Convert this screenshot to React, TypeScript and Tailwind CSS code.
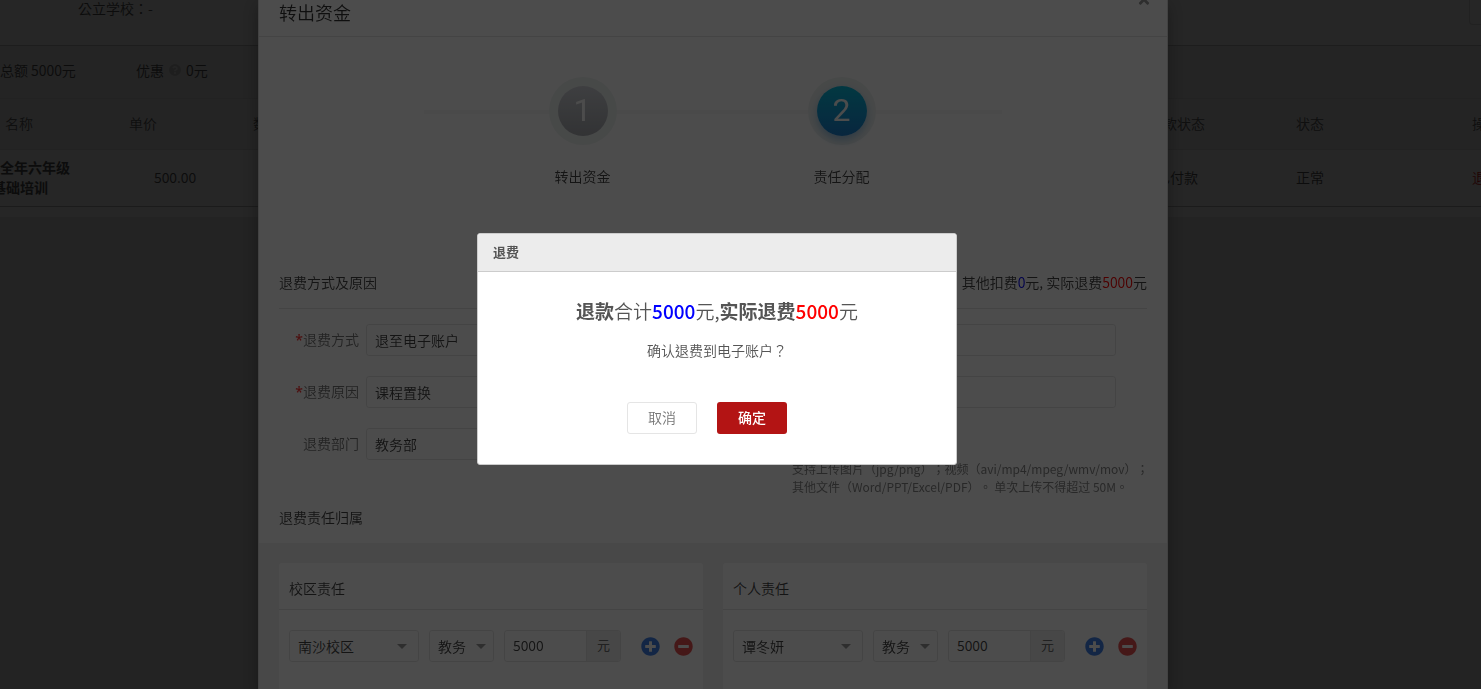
import React, { useState } from "react";
import {
  FaMinusCircle,
  FaPlusCircle,
  FaQuestionCircle,
  FaTimes,
} from "react-icons/fa";

interface DutyCardProps {
  title: string;
  owner: string;
}

interface SelectBoxProps {
  id?: string;
  label?: string;
  value: string;
  className?: string;
  small?: boolean;
}

const SelectBox = ({
  id,
  label,
  value,
  className = "",
  small,
}: SelectBoxProps) => (
  <div className={`relative h-8 ${className}`}>
    <select
      id={id}
      aria-label={label}
      className="block h-8 w-full appearance-none rounded-[3px] border border-[#e5e5e5] bg-white pl-2 text-sm text-[#444]"
    >
      <option>{value}</option>
    </select>
    <svg
      viewBox="0 0 10 5"
      className={`pointer-events-none absolute top-3.5 h-[5px] w-2.5 fill-[#999] ${
        small ? "right-2" : "right-3"
      }`}
    >
      <path d="M0 0h10L5 5z" />
    </svg>
  </div>
);

const Background = () => (
  <div className="min-h-screen overflow-hidden bg-[#ebebeb]">
    <div className="bg-white pb-2.5">
      <div className="flex h-[46px] justify-between border-b border-[#c4c4c4] pl-[78px]">
        <p className="font-['Noto_Sans_CJK_TC',sans-serif] leading-4">
          公立学校：-
        </p>
        <div className="h-[25px] w-3 rounded-bl border-b border-l border-[#ddd]" />
      </div>
      <div className="flex h-[52px] items-center bg-[#f1f1f1] pb-1">
        <p className="w-[136px]">总额 5000元</p>
        <p className="flex items-center gap-[5px]">
          优惠
          <FaQuestionCircle className="h-3 w-3 text-[#c8c8c8]" />
          0元
        </p>
      </div>
      <table className="w-full table-fixed border-b border-[#bbb] text-left">
        <colgroup>
          <col className="w-[129px]" />
          <col className="w-[124px]" />
          <col />
          <col className="w-[147px]" />
          <col className="w-[176px]" />
          <col className="w-[9px]" />
        </colgroup>
        <thead>
          <tr className="h-[51px] whitespace-nowrap border-y border-[#e4e4e4] bg-[#f5f5f5] text-[#666]">
            <th className="pb-0.5 pl-[5px] font-[350]">名称</th>
            <th className="pb-0.5 font-[350]">单价</th>
            <th className="pb-0.5 font-[350]">数</th>
            <th className="pb-0.5 font-[350]">付款状态</th>
            <th className="pb-0.5 font-[350]">状态</th>
            <th className="pb-0.5 font-[350]">操作</th>
          </tr>
        </thead>
        <tbody>
          <tr className="h-[57px] whitespace-nowrap">
            <td className="pb-0.5 font-bold leading-5">
              <p>全年六年级</p>
              <p className="-ml-2">基础培训</p>
            </td>
            <td className="pb-0.5 pl-[25px]">500.00</td>
            <td />
            <td className="pb-0.5 pl-[7px]">已付款</td>
            <td className="pb-0.5">正常</td>
            <td className="pb-0.5 text-[#e02020]">退</td>
          </tr>
        </tbody>
      </table>
    </div>
  </div>
);

const Steps = () => (
  <div className="relative mx-auto mt-10 flex w-[578px] justify-center pr-0.5 text-[#444]">
    <div className="absolute top-[33px] left-0 h-1 w-full bg-[#f8f8f8]" />
    <div className="relative flex w-[259px] flex-col items-center">
      <div className="flex h-[68px] w-[68px] items-center justify-center rounded-full bg-[#eff3f2]">
        <span className="flex h-[50px] w-[50px] items-center justify-center rounded-full bg-linear-to-b from-[#d0d2d8] to-[#a8abb0] font-['Roboto',sans-serif] text-[32px] font-normal text-white">
          1
        </span>
      </div>
      <p className="mt-[22px] leading-[18px]">转出资金</p>
    </div>
    <div className="relative flex w-[259px] flex-col items-center">
      <div className="flex h-[68px] w-[68px] items-center justify-center rounded-full bg-[#eff3f2]">
        <span className="flex h-[50px] w-[50px] items-center justify-center rounded-full bg-linear-to-b from-[#08bcdc] to-[#1c80d0] font-['Roboto',sans-serif] text-[32px] font-normal text-white shadow-[0_4px_8px_rgba(28,128,208,0.4)]">
          2
        </span>
      </div>
      <p className="mt-[22px] leading-[18px]">责任分配</p>
    </div>
  </div>
);

const DutyCard = ({ title, owner }: DutyCardProps) => (
  <div className="flex-1 rounded-t-[3px] bg-white">
    <h3 className="h-[47px] border-b border-[#e5e5e5] pt-4 pl-2.5 leading-[18px] text-[#444]">
      {title}
    </h3>
    <div className="flex items-center px-2.5 pt-5">
      <SelectBox label={title} value={owner} className="mr-2.5 w-[130px]" />
      <SelectBox
        small
        label={`${title} 教务`}
        value="教务"
        className="mr-2.5 w-[65px]"
      />
      <div className="flex h-8 w-[117px] overflow-hidden rounded-[3px] border border-[#e5e5e5]">
        <input
          aria-label={`${title} 元`}
          defaultValue="5000"
          className="w-[81px] pb-0.5 pl-2 text-sm text-[#444]"
        />
        <span className="flex-1 border-l border-[#e5e5e5] bg-[#eee] text-center text-[13px] leading-[27px]">
          元
        </span>
      </div>
      <button aria-label="+" className="mr-3.5 ml-auto">
        <FaPlusCircle className="h-[19px] w-[19px] text-[#4080e8]" />
      </button>
      <button aria-label="-">
        <FaMinusCircle className="h-[19px] w-[19px] text-[#e85050]" />
      </button>
    </div>
  </div>
);

const RefundModal = () => (
  <div className="fixed inset-0 flex justify-center overflow-hidden bg-black/50 pr-[55px]">
    <div className="relative flex w-full max-w-[910px] flex-col border-x border-[#ddd] bg-white shadow-[0_5px_15px_rgba(0,0,0,0.3)]">
      <button aria-label="×" className="absolute -top-2 right-4">
        <FaTimes className="h-[15px] w-3.5 text-[#999]" />
      </button>
      <h2 className="h-[37px] shrink-0 border-b border-[#e5e5e5] pl-5 text-lg leading-6 text-[#333]">
        转出资金
      </h2>
      <Steps />
      <div className="mt-[88px] px-5">
        <div className="flex h-9 justify-between border-b border-[#e5e5e5] leading-[18px] text-[#444]">
          <h3>退费方式及原因</h3>
          <p>
            其他扣费<span className="text-[#00f]">0</span>元, 实际退费
            <span className="text-[#f00]">5000</span>元
          </p>
        </div>
        <form className="flex justify-between pt-[15px] pr-[31px]">
          <div className="flex flex-col gap-5">
            <div className="flex items-center">
              <label htmlFor="way" className="w-20 pb-0.5 text-right text-[#777]">
                <span className="font-['Noto_Sans',sans-serif] font-medium text-[#f33]">
                  *
                </span>
                退费方式
              </label>
              <SelectBox id="way" value="退至电子账户" className="ml-[7px] w-[260px]" />
            </div>
            <div className="flex items-center">
              <label htmlFor="reason" className="w-20 pb-0.5 text-right text-[#777]">
                <span className="font-['Noto_Sans',sans-serif] font-medium text-[#f33]">
                  *
                </span>
                退费原因
              </label>
              <SelectBox id="reason" value="课程置换" className="ml-[7px] w-[260px]" />
            </div>
            <div className="flex items-center">
              <label htmlFor="dept" className="w-20 pb-0.5 text-right text-[#777]">
                退费部门
              </label>
              <SelectBox id="dept" value="教务部" className="ml-[7px] w-[260px]" />
            </div>
          </div>
          <div className="flex w-[324px] flex-col gap-5">
            <input
              aria-label="其他扣费"
              className="h-8 rounded-[3px] border border-[#e5e5e5] px-2"
            />
            <input
              aria-label="实际退费"
              className="h-8 rounded-[3px] border border-[#e5e5e5] px-2"
            />
            <p className="mt-8 h-12 whitespace-nowrap font-['Noto_Sans_CJK_TC',sans-serif] text-xs font-normal leading-[18px] text-[#888]">
              支持上传图片（jpg/png）；视频（avi/mp4/mpeg/wmv/mov）；
              <br />
              其他文件（Word/PPT/Excel/PDF）。 单次上传不得超过 50M。
            </p>
          </div>
        </form>
        <h3 className="h-[35px] leading-[18px] text-[#444]">退费责任归属</h3>
      </div>
      <div className="flex flex-1 gap-5 bg-[#f0f0f0] px-5 pt-5">
        <DutyCard title="校区责任" owner="南沙校区" />
        <DutyCard title="个人责任" owner="谭冬妍" />
      </div>
    </div>
  </div>
);

const ConfirmDialog = ({ onClose }: { onClose: () => void }) => (
  <div className="fixed inset-0 flex items-center justify-center bg-black/70 pt-[9px] pr-[47px]">
    <div
      role="dialog"
      aria-label="退费"
      className="w-full max-w-[480px] overflow-hidden rounded-[3px] border border-[#ccc] bg-white"
    >
      <h2 className="h-[38px] border-b border-[#ccc] bg-[#ececec] pl-[15px] text-[13px] font-bold leading-9">
        退费
      </h2>
      <div className="pt-[23px] pb-[30px] text-center">
        <p className="text-[19px] leading-8">
          <b className="font-bold">退款</b>合计
          <b className="font-medium text-[#00f]">5000</b>元,
          <b className="font-bold">实际退费</b>
          <b className="font-medium text-[#f00]">5000</b>元
        </p>
        <p className="mt-[11px] font-['Noto_Sans_CJK_TC',sans-serif] leading-6">
          确认退费到电子账户？
        </p>
        <div className="mt-10 flex justify-center gap-5 pr-5">
          <button
            onClick={onClose}
            className="h-8 w-[70px] rounded-[3px] border border-[#e5e5e5] pb-0.5 text-[#777]"
          >
            取消
          </button>
          <button
            onClick={onClose}
            className="h-8 w-[70px] rounded-[3px] bg-[#b31414] pb-0.5 font-medium text-white"
          >
            确定
          </button>
        </div>
      </div>
    </div>
  </div>
);

const App = (): React.JSX.Element => {
  const [confirmOpen, setConfirmOpen] = useState(true);

  return (
    <div className="font-['Noto_Sans_CJK_SC',sans-serif] text-sm font-[350] text-[#555] [text-spacing-trim:space-all]">
      <Background />
      <RefundModal />
      {confirmOpen && <ConfirmDialog onClose={() => setConfirmOpen(false)} />}
    </div>
  );
};

export default App;
